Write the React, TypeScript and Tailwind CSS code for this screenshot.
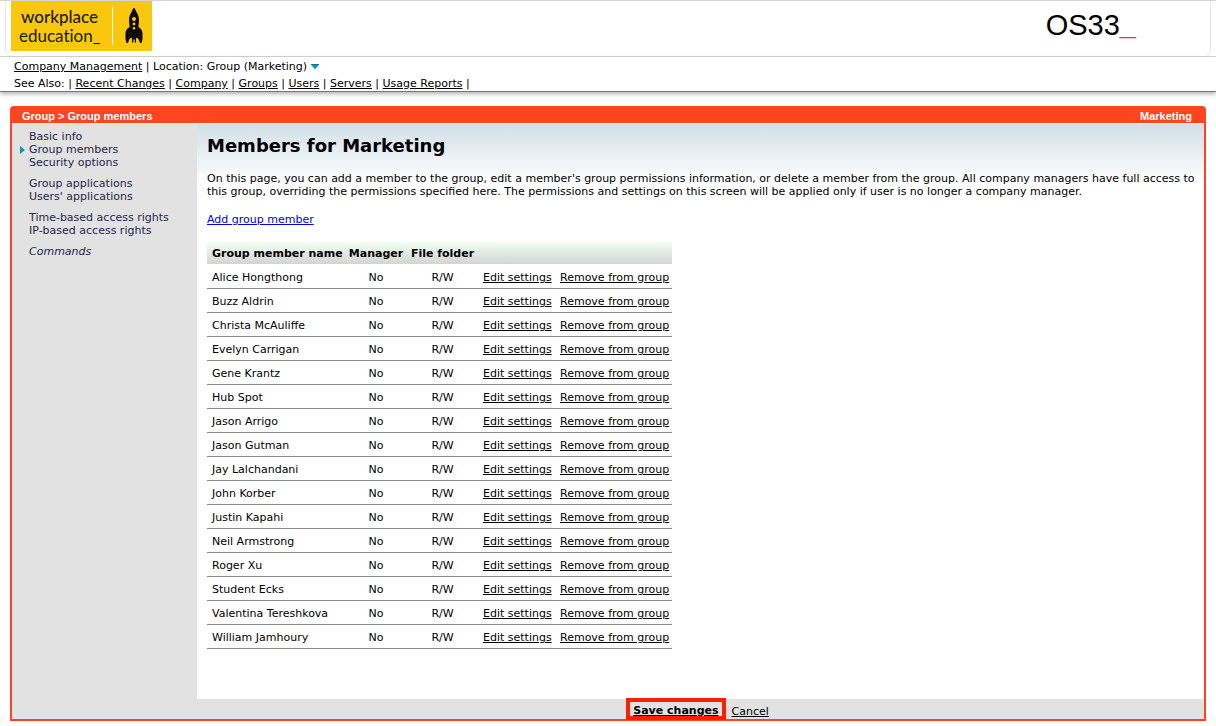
import type { ReactNode } from 'react'

const FONT = "font-['DejaVu_Sans',Verdana,sans-serif]"

const SEE_ALSO = ['Recent Changes', 'Company', 'Groups', 'Users', 'Servers', 'Usage Reports']

const MENU = [
  ['Basic info', 'Group members', 'Security options'],
  ['Group applications', "Users' applications"],
  ['Time-based access rights', 'IP-based access rights'],
  ['Commands'],
]

const MEMBERS = [
  'Alice Hongthong',
  'Buzz Aldrin',
  'Christa McAuliffe',
  'Evelyn Carrigan',
  'Gene Krantz',
  'Hub Spot',
  'Jason Arrigo',
  'Jason Gutman',
  'Jay Lalchandani',
  'John Korber',
  'Justin Kapahi',
  'Neil Armstrong',
  'Roger Xu',
  'Student Ecks',
  'Valentina Tereshkova',
  'William Jamhoury',
]

function TextLink({ children }: { children: ReactNode }) {
  return <a href="#" className="underline">{children}</a>
}

function Rocket() {
  return (
    <svg viewBox="0 0 18 36" className="h-9 w-[18px]" aria-hidden="true">
      <path
        fill="#0a0a0a"
        d="M9 0C8 0 7.600 2 6.800 3.500C5 6.500 4 9 4 12.500L4.600 19C2 20.500 .5 22.500 .5 25.500V31L1.500 35H3L4.200 31.500L6 29.500L7 30.500V34.500H8.300V31.500H9.700V34.500H11V30.500L12 29.500L13.800 31.500L15 35H16.500L17.500 31V25.500C17.500 22.500 16 20.500 13.400 19L14 12.500C14 9 13 6.500 11.200 3.500C10.400 2 10 0 9 0Z"
      />
      <g fill="#f9c80e">
        <circle cx="9" cy="11" r="2" />
        <circle cx="9" cy="16" r="1.400" />
        <circle cx="9" cy="20.300" r="1.300" />
      </g>
    </svg>
  )
}

function Header() {
  return (
    <header className="border-y border-[#d5d5d8] px-[5px]">
      <div className="flex h-[55px] items-start justify-between rounded-b-md border-x border-[#dfe6e6] pl-[5px] pr-[74px]">
        <div className="flex h-[50px] w-[141px] items-center bg-[#f9c80e] pl-2 text-[#1a1a1a] font-['Lato',sans-serif]">
          <div className="w-[93px] pb-[1px] text-[17px] leading-[19px] [font-variant-ligatures:none]">
            <div className="pl-[2px] font-medium">workplace</div>
            <div>education_</div>
          </div>
          <div className="h-[38px] w-px bg-white" />
          <div className="flex flex-1 justify-center pl-[2px]">
            <Rocket />
          </div>
        </div>
        <div className="pt-2 text-[29px] leading-8 text-black font-['Liberation_Sans',sans-serif]">
          OS33<span className="font-bold text-[#ee3124]">_</span>
        </div>
      </div>
    </header>
  )
}

function Nav() {
  return (
    <nav className="h-[35px] border-b border-[#777] px-[14px] pt-[1px] leading-[17px] shadow-[0_2px_4px_rgba(0,0,0,0.3)]">
      <div className="flex items-center">
        <TextLink>Company Management</TextLink>
        <span className="whitespace-pre"> | Location: Group (Marketing)</span>
        <svg viewBox="0 0 8 6" className="ml-1 h-[6px] w-2" aria-hidden="true">
          <path d="M0 .5H8L4 5.500Z" fill="#0b8fca" />
          <path d="M0 0H8V1H0Z" fill="#0b6f9f" />
        </svg>
      </div>
      <div>
        See Also: |{' '}
        {SEE_ALSO.map((item) => (
          <span key={item}><TextLink>{item}</TextLink> | </span>
        ))}
      </div>
    </nav>
  )
}

function Sidebar() {
  return (
    <aside className="w-[185px] shrink-0 bg-[#e2e2e2] pl-2 pt-[6px] leading-[13px] text-[#26264f]">
      {MENU.map((group) => (
        <ul key={group[0]} className="mb-2">
          {group.map((item) => (
            <li key={item} className="flex items-center">
              <span className="w-[9px]">
                {item === 'Group members' && (
                  <svg viewBox="0 0 5 8" className="h-2 w-[5px]" aria-hidden="true">
                    <path d="M0 0L5 4L0 8Z" fill="#0b8fca" />
                  </svg>
                )}
              </span>
              <a href="#" className={item === 'Commands' ? 'italic' : ''}>{item}</a>
            </li>
          ))}
        </ul>
      ))}
    </aside>
  )
}

function MembersTable() {
  return (
    <table className="mt-[16px] w-[465px] table-fixed border-collapse">
      <colgroup>
        <col className="w-[138px]" />
        <col className="w-[62px]" />
        <col className="w-[71px]" />
        <col className="w-[77px]" />
        <col className="w-[117px]" />
      </colgroup>
      <thead>
        <tr className="h-[22px] bg-linear-to-b from-[#f2fff4] to-[#d2d6d2] [&>th]:pt-[2px]">
          <th className="whitespace-nowrap pl-[5px] text-left">Group member name</th>
          <th>Manager</th>
          <th className="whitespace-nowrap">File folder</th>
          <td />
          <td />
        </tr>
      </thead>
      <tbody>
        {MEMBERS.map((name) => (
          <tr key={name} className="h-6 border-b border-[#8c8c8c] [&>td]:pt-[5px]">
            <td className="whitespace-nowrap pl-[5px]">{name}</td>
            <td className="text-center">No</td>
            <td className="text-center">R/W</td>
            <td className="whitespace-nowrap pl-[5px]"><TextLink>Edit settings</TextLink></td>
            <td className="whitespace-nowrap pl-[5px]"><TextLink>Remove from group</TextLink></td>
          </tr>
        ))}
      </tbody>
    </table>
  )
}

export default function App() {
  return (
    <div className={`bg-white text-[11px] text-black ${FONT}`}>
      <Header />
      <Nav />
      <div className="mx-[10px] mt-[14px] mb-[5px]">
        <div className="flex h-[17px] items-center justify-between rounded-t bg-[#ff4422] px-3 pt-[3px] font-bold text-white font-['Liberation_Sans',sans-serif]">
          <span>Group &gt; Group members</span>
          <span className="pr-[2px]">Marketing</span>
        </div>
        <div className="border-x-2 border-b-2 border-[#ff4422] bg-[#e2e2e2]">
          <div className="flex border-t border-[#f6efe9]">
            <Sidebar />
            <main className="flex-1 bg-white bg-linear-to-b from-[#d2dfe7] to-white to-[60px] pl-[10px] pr-2 pt-[10px] pb-[50px]">
              <h1 className="text-[18px] font-bold leading-6">Members for Marketing</h1>
              <p className="mt-[14px] leading-[13px]">
                On this page, you can add a member to the group, edit a member's group permissions information, or
                delete a member from the group. All company managers have full access to this group, overriding the
                permissions specified here. The permissions and settings on this screen will be applied only if user
                is no longer a company manager.
              </p>
              <a href="#" className="mt-[15px] block w-fit leading-[13px] text-[#0000ee] underline">Add group member</a>
              <MembersTable />
            </main>
          </div>
          <div className="flex h-5 items-center justify-center gap-[6px] pl-[179px]">
            <button type="button" className="-my-1 h-[22px] border-4 border-[#ff1e00] px-[3px] pt-1 font-bold leading-[10px] underline">
              Save changes
            </button>
            <button type="button" className="pt-[5px] leading-[15px] underline">Cancel</button>
          </div>
        </div>
      </div>
    </div>
  )
}
